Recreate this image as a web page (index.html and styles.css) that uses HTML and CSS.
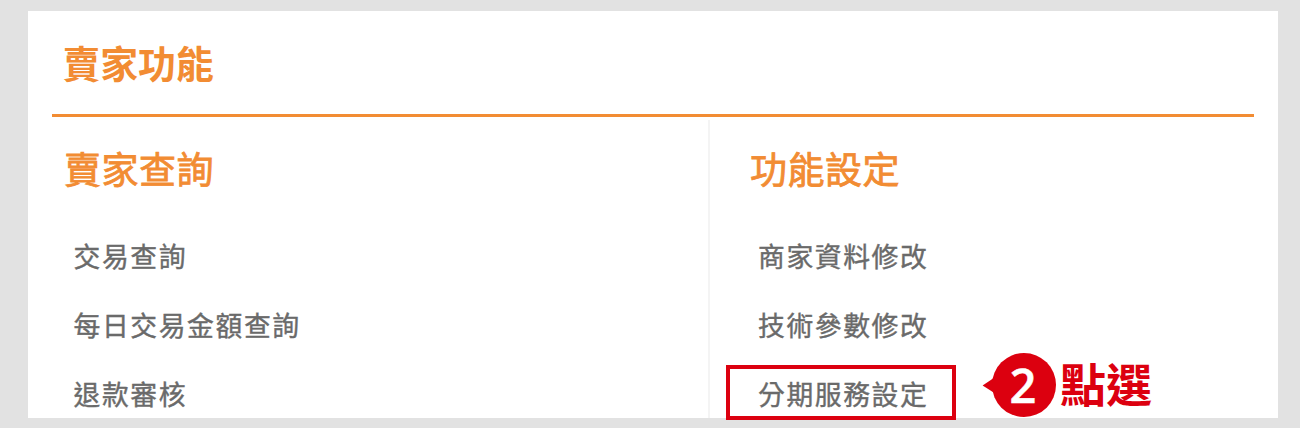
FILE: index.html
```html
<!DOCTYPE html>
<html lang="zh-Hant">
<head>
<meta charset="utf-8">
<title>賣家功能</title>
<link rel="stylesheet" href="styles.css">
</head>
<body>
<main class="panel">
  <h1 class="title">賣家功能</h1>
  <div class="columns">
    <section class="column">
      <h2 class="heading">賣家查詢</h2>
      <ul class="menu">
        <li class="item">交易查詢</li>
        <li class="item">每日交易金額查詢</li>
        <li class="item">退款審核</li>
      </ul>
    </section>
    <section class="column column-settings">
      <h2 class="heading">功能設定</h2>
      <ul class="menu">
        <li class="item">商家資料修改</li>
        <li class="item">技術參數修改</li>
        <li class="item">分期服務設定</li>
      </ul>
    </section>
  </div>
  <div class="highlight"></div>
  <div class="callout">
    <svg class="pin" width="75" height="66" viewBox="0 0 75 66"><path d="M.6 33.4 14 24.5V42Z" fill="#dc000f"/><circle cx="42" cy="33" r="32" fill="#dc000f"/></svg>
    <span class="step">2</span>
    <span class="action">點選</span>
  </div>
</main>
</body>
</html>
```
FILE: styles.css
```css
* { box-sizing: border-box; }
body {
  margin: 0;
  height: 428px;
  padding: 11px 22px 10px 28px;
  overflow: hidden;
  background: #e2e2e2;
  font-family: "Noto Sans CJK TC", sans-serif;
}
.panel {
  position: relative;
  height: 407px;
  padding: 0 24.5px 0 23.5px;
  background: #fff;
}
.title {
  margin: 0;
  height: 106px;
  padding: 23px 11px 0;
  border-bottom: 3px solid #f28c33;
  font-size: 37.8px;
  line-height: 56px;
  font-weight: 700;
  color: #f28c33;
}
.columns {
  display: grid;
  grid-template-columns: 656px 1fr;
  grid-template-rows: 298px;
  margin-top: 3px;
}
.column { padding: 20px 12.5px 0; }
.column-settings {
  padding-left: 40.5px;
  border-left: 2px solid #f4f4f4;
}
.heading {
  margin: 0 0 40px;
  font-size: 37px;
  letter-spacing: 0.5px;
  line-height: 56px;
  font-weight: 400;
  color: #f28c33;
  -webkit-text-stroke: 0.8px #f28c33;
}
.menu { margin: 0; padding: 0 0 0 9.5px; list-style: none; }
.column-settings .menu { padding-left: 8px; }
.item {
  height: 69px;
  font-size: 26.8px;
  line-height: 40px;
  letter-spacing: 1.6px;
  color: #6a6a6a;
  -webkit-text-stroke: 0.4px #6a6a6a;
}
.highlight {
  position: absolute;
  left: 698px;
  top: 353.5px;
  width: 230px;
  height: 55.5px;
  border: 4px solid #dc000f;
}
.callout {
  position: absolute;
  left: 954px;
  top: 341px;
  display: flex;
  align-items: center;
  color: #dc000f;
  font-weight: 700;
}
.pin { display: block; }
.step {
  width: 66px;
  margin-left: -67px;
  margin-right: 1px;
  text-align: center;
  font-family: "Open Sans", sans-serif;
  font-weight: 600;
  font-size: 47px;
  line-height: 66px;
  color: #fff;
  -webkit-text-stroke: 0.5px #fff;
}
.action {
  margin-left: 3px;
  padding-bottom: 5px;
  font-size: 46px;
  line-height: 61px;
}
```
